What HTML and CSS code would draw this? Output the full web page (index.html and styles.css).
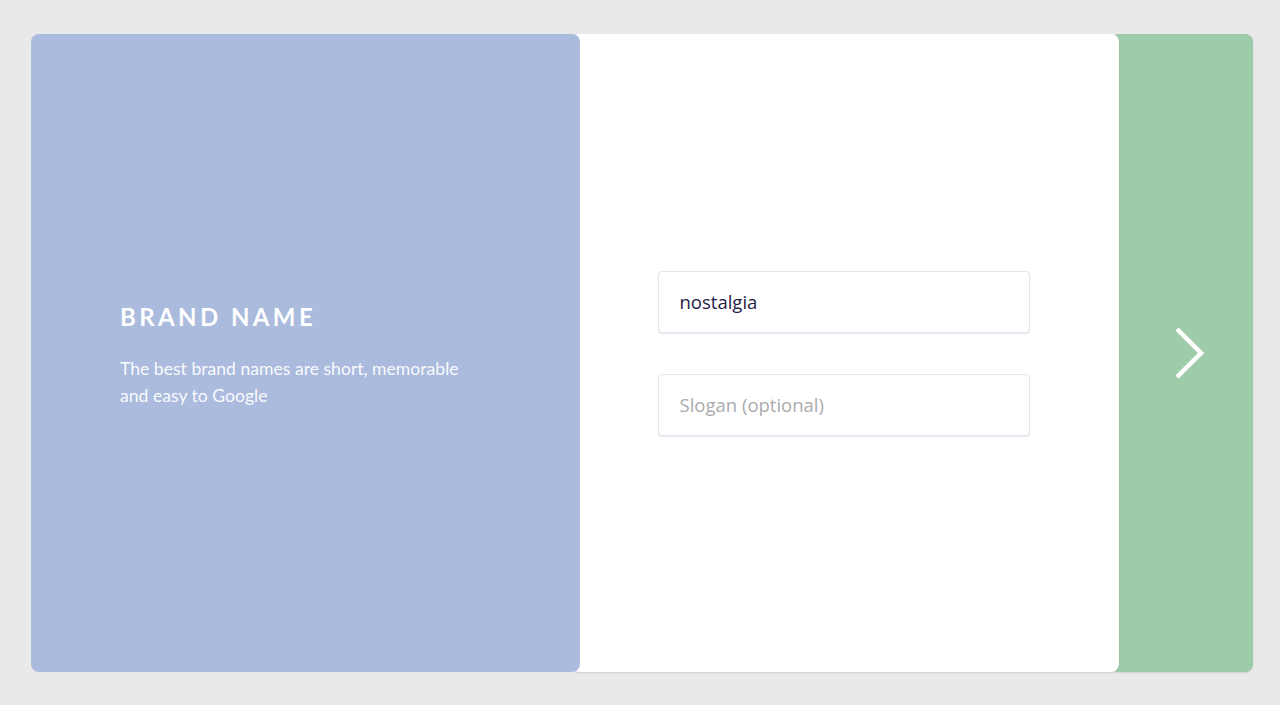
FILE: index.html
```html
<!DOCTYPE html>
<html lang="en">
<head>
    <meta charset="UTF-8">
    <meta name="viewport" content="width=device-width, initial-scale=1.0">
    <title>Brand name</title>
    <link rel="stylesheet" href="styles.css">
</head>
<body>
    <div class="wizard-card">
        <div class="info-panel">
            <div class="info-title">Brand name</div>
            <div class="info-text">The best brand names are short, memorable and easy to Google</div>
        </div>

        <div class="form-panel">
            <input class="field" type="text" value="nostalgia">
            <input class="field" type="text" placeholder="Slogan (optional)">
        </div>

        <div class="next-panel">
            <svg class="next-arrow" width="32" height="52" viewBox="0 0 32 52">
                <polyline points="3,2 27,26 3,50" fill="none" stroke="#fff" stroke-width="4.5"/>
            </svg>
        </div>
    </div>
</body>
</html>
```

FILE: styles.css
```css
body {
    font-family: "Lato", "Open Sans", sans-serif;
    margin: 0;
    padding: 34px 27px 33px 31px;
    background-color: #e9e9e9;
}
.wizard-card {
    display: flex;
    height: 638px;
}
.info-panel {
    flex: 0 0 549px;
    box-sizing: border-box;
    padding: 5px 89px 0;
    display: flex;
    flex-direction: column;
    justify-content: center;
    background-color: #abbbdd;
    border-radius: 8px;
    position: relative;
    z-index: 3;
    color: white;
}
.info-title {
    font-size: 24px;
    font-weight: 700;
    letter-spacing: 3.4px;
    text-transform: uppercase;
    margin-bottom: 24px;
}
.info-text {
    font-size: 17.6px;
    line-height: 27px;
    max-width: 360px;
    color: rgba(255, 255, 255, 0.95);
}
.form-panel {
    flex: 0 0 547px;
    box-sizing: border-box;
    margin-left: -8px;
    padding-right: 4px;
    display: flex;
    flex-direction: column;
    align-items: center;
    justify-content: center;
    gap: 41px;
    background-color: white;
    border-radius: 8px;
    box-shadow: 0 1px 2px rgba(0, 0, 0, 0.12);
    position: relative;
    z-index: 2;
}
.field {
    width: 372px;
    height: 62px;
    box-sizing: border-box;
    padding: 0 21px;
    border: 1px solid #dfe6ef;
    border-radius: 4px;
    box-shadow: 0 1px 1px rgba(120, 140, 170, 0.2);
    font-family: "Open Sans", sans-serif;
    font-size: 18.5px;
    color: #1f2145;
    outline: none;
}
.field::placeholder {
    color: #ababab;
}
.next-panel {
    flex: 1;
    margin-left: -8px;
    display: flex;
    align-items: center;
    justify-content: center;
    padding-left: 15px;
    background-color: #9ecba9;
    border-radius: 8px;
    box-shadow: 0 1px 2px rgba(0, 0, 0, 0.12);
    position: relative;
    z-index: 1;
}
```
